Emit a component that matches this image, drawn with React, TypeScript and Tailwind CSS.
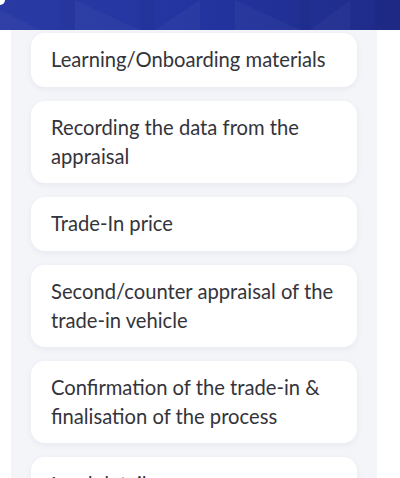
import React from 'react';

const steps = [
  'Learning/Onboarding materials',
  'Recording the data from the appraisal',
  'Trade-In price',
  'Second/counter appraisal of the trade-in vehicle',
  'Confirmation of the trade-in & finalisation of the process',
  'Lead details',
];

function Header() {
  return (
    <div className="relative h-[30px] overflow-hidden bg-gradient-to-r from-[#2a3aa5] via-[#2334a0] to-[#1f2b88]">
      <svg className="absolute inset-0 h-full w-full" viewBox="0 0 400 30" preserveAspectRatio="none">
        <g fill="#ffffff" fillOpacity="0.03">
          <polygon points="0,10 40,30 0,30" />
          <polygon points="75,0 140,30 75,30" />
          <polygon points="155,30 200,0 200,30" />
          <polygon points="235,0 300,30 235,30" />
          <polygon points="310,30 350,0 350,30" />
        </g>
        <g fill="#000000" fillOpacity="0.035">
          <polygon points="60,0 75,0 75,30 60,30" />
          <polygon points="140,0 155,0 155,30 140,30" />
          <polygon points="300,0 310,0 310,30 300,30" />
          <polygon points="375,0 400,0 400,30 375,30" />
        </g>
      </svg>
      <div className="absolute left-0 top-0 h-[5px] w-[5px] rounded-br-full bg-white" />
    </div>
  );
}

export default function App() {
  return (
    <div className="h-[478px] w-[400px] overflow-hidden bg-white font-['Lato','Liberation_Sans',sans-serif]">
      <Header />
      <div className="flex">
        <div className="ml-[11px] w-[366px] bg-[#f4f5f9] px-5 pt-[3px] pb-6">
          <div className="flex flex-col gap-[14px]">
            {steps.map(s => (
              <div
                key={s}
                className="rounded-[14px] bg-white px-5 py-[12.4px] text-[20.2px] font-normal leading-[28.8px] text-[#34343b] shadow-[0_2px_6px_rgba(30,40,90,0.06)]"
              >
                {s}
              </div>
            ))}
          </div>
        </div>
        <div className="flex-1" />
      </div>
    </div>
  );
}
